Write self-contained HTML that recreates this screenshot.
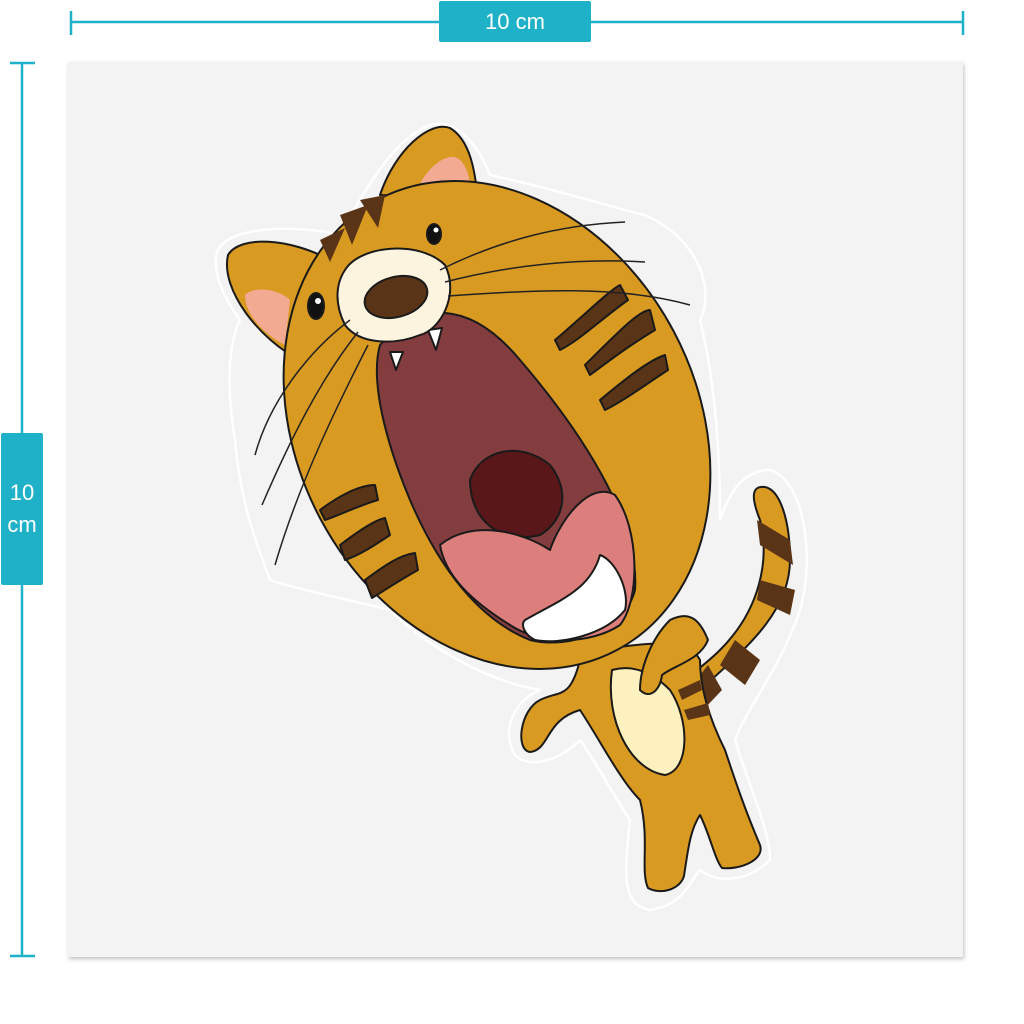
<!DOCTYPE html>
<html><head><meta charset="utf-8"><style>
html,body{margin:0;padding:0;background:#fff;width:1024px;height:1024px;overflow:hidden;font-family:"Liberation Sans",sans-serif}
.lbl{position:absolute;background:#1fb1c8;color:#fff;font-size:22px;display:flex;align-items:center;justify-content:center;border-radius:2px;text-align:center}
</style></head><body>
<svg width="1024" height="1024" style="position:absolute;left:0;top:0">
<g stroke="#1fb1c8" stroke-width="2.5">
<line x1="70" y1="22" x2="964" y2="22"/><line x1="71" y1="11" x2="71" y2="35"/><line x1="963" y1="11" x2="963" y2="35"/>
<line x1="22" y1="63" x2="22" y2="956"/><line x1="10" y1="63" x2="35" y2="63"/><line x1="10" y1="956" x2="35" y2="956"/>
</g>
<rect x="68" y="62" width="895" height="895" fill="#f3f3f3" style="filter:drop-shadow(1px 2px 2px rgba(0,0,0,.25))"/>
<path d="M218 250 C230 225 300 225 340 235 C360 200 390 140 430 125 C460 118 480 150 490 175 C560 190 620 210 645 215 C700 240 715 290 700 320 C715 380 720 450 720 520 C730 490 745 470 770 470 C805 480 815 560 800 610 C780 670 745 710 735 740 C750 790 770 830 770 860 C750 880 720 885 700 870 C690 880 685 905 650 910 C620 905 625 870 630 820 C610 790 595 760 580 740 C560 760 530 770 515 755 C500 730 515 700 540 690 C480 680 420 640 390 610 C350 600 300 590 270 580 C255 540 240 500 235 440 C225 380 230 340 240 320 C225 300 210 270 218 250Z" fill="none" stroke="#fff" stroke-width="2.5" stroke-linejoin="round"/>
<g stroke="#1a1a1a" stroke-width="2" stroke-linejoin="round">
<!-- tail -->
<path d="M690 700 C730 660 790 620 790 560 C790 520 780 490 765 487 C750 485 752 500 760 520 C770 560 760 610 720 650 C700 670 680 680 680 690 Z" fill="#d99a21"/>
<path d="M757 520 L790 540 L793 565 L760 545Z M760 580 L795 590 L790 615 L757 600Z M735 640 L760 660 L745 685 L720 665Z M708 665 L722 690 L705 708 L690 688Z" fill="#5a3416" stroke="none"/>
<!-- body -->
<path d="M580 660 C570 700 560 690 540 700 C520 710 515 750 530 752 C550 750 545 720 580 710 C600 740 620 780 640 800 C650 840 640 870 648 888 C660 895 680 890 684 876 C688 850 690 830 700 815 C710 835 715 860 722 868 C740 870 765 860 760 845 C745 810 735 780 725 750 C710 720 700 690 700 660 C690 640 660 640 600 650Z" fill="#d99a21"/>
<path d="M612 670 C605 720 630 770 665 775 C690 770 690 720 670 690 C650 670 630 665 612 670Z" fill="#fdf1bf"/>
<path d="M670 620 C650 640 640 670 640 690 C650 700 660 690 662 675 C675 665 700 660 708 640 C700 620 690 610 670 620Z" fill="#d99a21"/>
<path d="M678 690 L700 680 L702 690 L682 700Z M684 710 L708 703 L710 715 L688 720Z" fill="#5a3416" stroke="none"/>
<!-- ears -->
<path d="M228 255 C240 235 290 238 330 260 L300 360 C260 340 220 290 228 255Z" fill="#d99a21"/>
<path d="M245 295 C255 285 280 290 290 300 L285 345 C265 335 245 315 245 295Z" fill="#f2aa93" stroke="none"/>
<path d="M380 195 C395 150 430 120 450 128 C470 140 475 170 478 200Z" fill="#d99a21"/>
<path d="M418 188 C428 165 450 150 460 160 C470 170 470 185 470 190Z" fill="#f2aa93" stroke="none"/>
<!-- head -->
<ellipse cx="497" cy="425" rx="200" ry="255" transform="rotate(-28 497 425)" fill="#d99a21"/>
<!-- stripes -->
<path d="M320 240 L330 262 L345 228Z M340 215 L352 245 L368 205Z M360 200 L378 228 L385 195Z" fill="#5a3416" stroke="none"/>
<path d="M555 340 C590 310 610 290 620 285 L628 300 C600 320 580 340 560 350Z M585 365 C620 330 640 310 650 310 L655 330 C630 345 610 360 590 375Z M600 400 C630 375 650 360 665 355 L668 370 C645 385 625 400 605 410Z" fill="#5a3416"/>
<path d="M320 510 C340 495 360 485 375 485 L378 500 C360 505 340 515 325 520Z M340 545 C360 530 375 520 385 518 L390 535 C375 545 360 555 345 560Z M365 580 C385 565 400 555 415 553 L418 570 C400 580 385 590 372 598Z" fill="#5a3416"/>
<!-- mouth -->
<path d="M380 345 C420 300 470 300 520 360 C580 430 640 520 635 590 C625 630 570 650 530 640 C480 620 440 570 410 500 C385 440 370 380 380 345Z" fill="#833d3f"/>
<path d="M470 480 C480 450 520 440 550 465 C570 490 565 520 540 535 C500 545 470 520 470 480Z" fill="#5a1719"/>
<path d="M440 545 C470 520 520 530 550 550 C560 520 590 480 615 495 C640 530 640 600 620 625 C590 645 540 645 510 625 C470 600 445 575 440 545Z" fill="#dc7f7c"/>
<path d="M525 620 C560 600 590 590 600 555 C615 560 630 590 625 610 C605 635 560 645 535 640 C525 635 520 625 525 620Z" fill="#fff"/>
<path d="M390 352 L396 370 L403 352Z M428 330 L436 350 L442 328Z" fill="#fff"/>
<!-- muzzle -->
<path d="M345 270 C360 245 420 240 445 265 C460 295 440 330 420 335 C395 345 360 345 345 325 C335 305 335 285 345 270Z" fill="#fdf4df"/>
<ellipse cx="396" cy="297" rx="32" ry="20" transform="rotate(-15 396 297)" fill="#5a3416"/>
<!-- eyes -->
<ellipse cx="434" cy="234" rx="7" ry="10" fill="#111"/>
<ellipse cx="316" cy="306" rx="8" ry="13" fill="#111"/>
</g>
<circle cx="436" cy="230" r="2.5" fill="#fff"/><circle cx="318" cy="301" r="3" fill="#fff"/>
<g stroke="#222" stroke-width="1.5" fill="none">
<path d="M440 270 C500 240 560 225 625 222"/><path d="M445 282 C510 265 580 258 645 262"/><path d="M448 296 C530 290 620 285 690 305"/>
<path d="M350 320 C310 350 270 400 255 455"/><path d="M358 332 C320 380 290 440 262 505"/><path d="M368 345 C340 400 300 480 275 565"/>
</g>
</svg>
<div class="lbl" style="left:439px;top:1px;width:152px;height:41px">10 cm</div>
<div class="lbl" style="left:1px;top:433px;width:42px;height:152px;line-height:32px">10<br>cm</div>
</body></html>
